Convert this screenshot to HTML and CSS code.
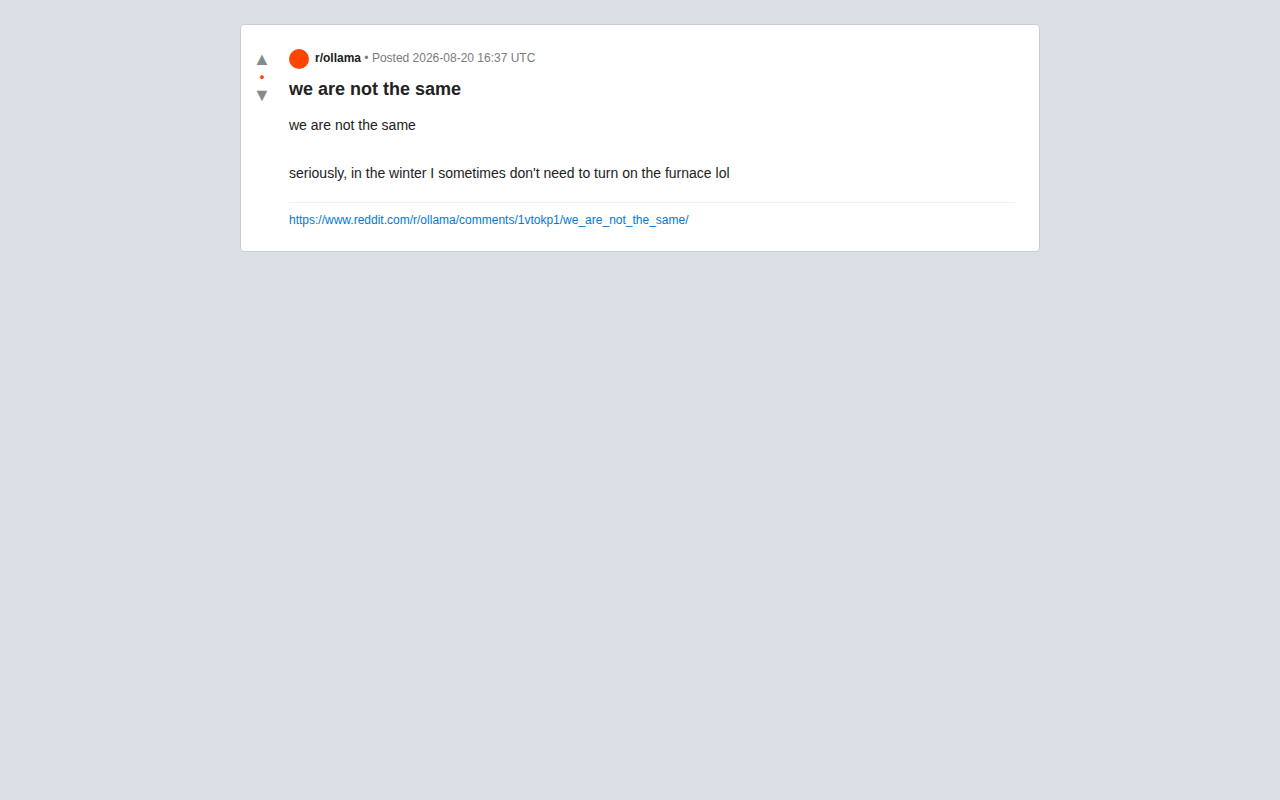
FILE: index.html
```html
<!DOCTYPE html>
<html lang="en">
  <head>
    <meta charset="UTF-8">
    <meta name="viewport" content="width=device-width, initial-scale=1.0">
    <title>we are not the same</title>
    <link rel="stylesheet" href="styles.css">
  </head>
  <body>
    <article class="post">
      <div class="votes">
        <button type="button" class="arrow" aria-label="Upvote">▲</button>
        <span class="score">•</span>
        <button type="button" class="arrow" aria-label="Downvote">▼</button>
      </div>
      <div class="content">
        <div class="meta">
          <span class="sub-icon"></span>
          <div><span class="sub-name">r/ollama</span> • Posted 2026-08-20 16:37 UTC</div>
        </div>
        <h1 class="title">we are not the same</h1>
        <div class="text">we are not the same<br><br>seriously, in the winter I sometimes don't need to turn on the furnace lol</div>
        <div class="link">
          <a href="https://www.reddit.com/r/ollama/comments/1vtokp1/we_are_not_the_same/">https://www.reddit.com/r/ollama/comments/1vtokp1/we_are_not_the_same/</a>
        </div>
      </div>
    </article>
  </body>
</html>
```
FILE: styles.css
```css
* {
  box-sizing: border-box;
}

body {
  margin: 0;
  padding: 24px;
  background: #dae0e6;
  color: #222;
  font-family: "Liberation Sans", Arial, sans-serif;
}

.post {
  display: flex;
  max-width: 800px;
  margin: 0 auto;
  padding: 24px 24px 24px 8px;
  background: #fff;
  border: 1px solid #ccc;
  border-radius: 4px;
}

.votes {
  display: flex;
  flex-direction: column;
  align-items: center;
  width: 26px;
  margin-right: 14px;
}

.arrow {
  padding: 0;
  border: none;
  background: none;
  color: #878a8c;
  font-family: inherit;
  font-size: 18px;
  line-height: 20px;
  cursor: pointer;
}

.score {
  color: #ff4500;
  font-size: 13px;
  font-weight: bold;
  line-height: 16px;
}

.content {
  flex: 1;
  min-width: 0;
}

.meta {
  display: flex;
  gap: 6px;
  margin-bottom: 8px;
  color: #787c7e;
  font-size: 12px;
  line-height: 18px;
}

.sub-icon {
  width: 20px;
  height: 20px;
  background: #ff4500;
  border-radius: 50%;
}

.sub-name {
  color: #1c1c1c;
  font-weight: bold;
}

.title {
  margin: 0 0 12px;
  font-size: 18px;
  line-height: 24px;
}

.text {
  margin-bottom: 17px;
  font-size: 14px;
  line-height: 24px;
}

.link {
  padding-top: 10px;
  border-top: 1px solid #edeff1;
  font-size: 12px;
  line-height: 14px;
}

.link a {
  color: #0079d3;
  text-decoration: none;
  overflow-wrap: anywhere;
}
```
